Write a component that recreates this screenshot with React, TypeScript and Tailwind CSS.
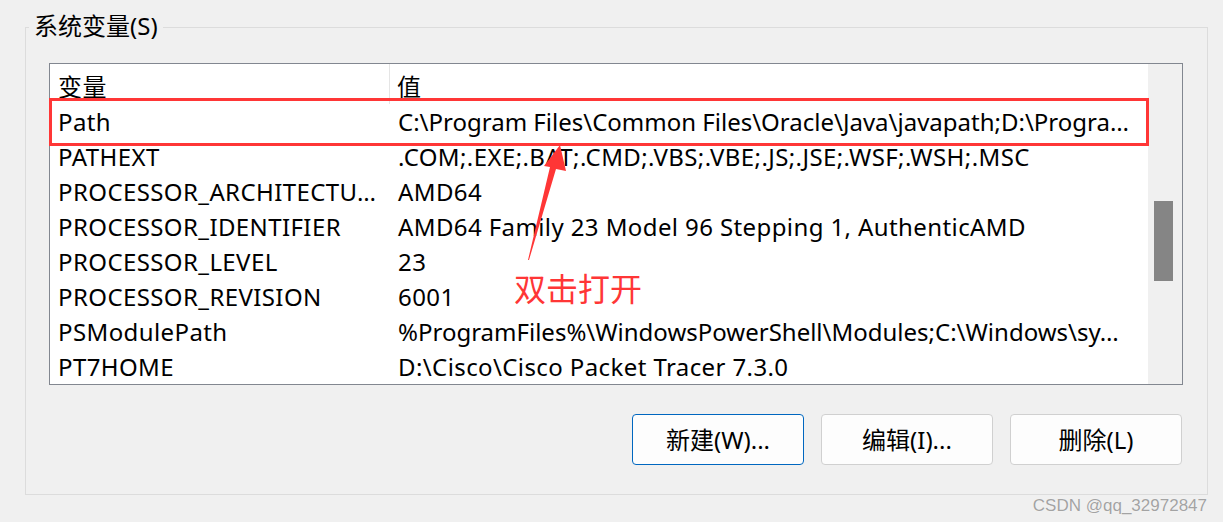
import React from 'react';

type EnvVar = {
  name: string;
  value: string;
  tight?: boolean;
};

// shown exactly as the list view clips them
const VARS: EnvVar[] = [
  { name: 'Path', value: 'C:\\Program Files\\Common Files\\Oracle\\Java\\javapath;D:\\Progra…', tight: true },
  { name: 'PATHEXT', value: '.COM;.EXE;.BAT;.CMD;.VBS;.VBE;.JS;.JSE;.WSF;.WSH;.MSC' },
  { name: 'PROCESSOR_ARCHITECTU…', value: 'AMD64' },
  { name: 'PROCESSOR_IDENTIFIER', value: 'AMD64 Family 23 Model 96 Stepping 1, AuthenticAMD' },
  { name: 'PROCESSOR_LEVEL', value: '23' },
  { name: 'PROCESSOR_REVISION', value: '6001' },
  { name: 'PSModulePath', value: '%ProgramFiles%\\WindowsPowerShell\\Modules;C:\\Windows\\sy…', tight: true },
  { name: 'PT7HOME', value: 'D:\\Cisco\\Cisco Packet Tracer 7.3.0' },
];

const FONT = 'font-["Noto_Sans","Noto_Sans_CJK_SC",sans-serif]';

const WinButton: React.FC<{ label: string; focused?: boolean }> = ({ label, focused }) => (
  <button
    type="button"
    className={
      focused
        ? 'h-[51px] w-[172px] rounded-[4px] border border-[#0067c0] bg-[#fdfdfd] text-[24px] text-black'
        : 'h-[51px] w-[172px] rounded-[4px] border border-[#d0d0d0] bg-[#fdfdfd] text-[24px] text-black'
    }
  >
    {label}
  </button>
);

const App: React.FC = () => {
  return (
    <div className={`relative h-[522px] w-[1223px] overflow-hidden bg-[#f0f0f0] pt-[27px] pl-[25px] text-black ${FONT}`}>
      {/* group box */}
      <div className="relative h-[468px] w-[1183px] border border-[#dcdcdc]">
        <div className="absolute top-[-17px] left-[3px] bg-[#f0f0f0] px-[5px] text-[24px] leading-[30px]">系统变量(S)</div>

        {/* list view */}
        <div className="ml-[23px] mt-[35px] flex h-[322px] w-[1134px] border border-[#828790] bg-white">
          <div className="w-[1098px] text-[24px] tracking-[0.4px]">
            <div className="flex h-[40px] items-center">
              <div className="flex h-full w-[340px] items-center border-r border-[#e5e5e5] pl-[8px] pt-[6px]">变量</div>
              <div className="flex h-full flex-1 items-center pl-[7px] pt-[6px]">值</div>
            </div>
            {VARS.map(v => (
              <div key={v.name} className="flex h-[35px] items-center whitespace-nowrap leading-[35px]">
                <div className="w-[341px] pl-[8px]">{v.name}</div>
                <div className={v.tight ? 'flex-1 pl-[7px] tracking-normal' : 'flex-1 pl-[7px]'}>{v.value}</div>
              </div>
            ))}
          </div>
          {/* scrollbar */}
          <div className="flex-1 bg-[#f0f0f0] pt-[137px]">
            <div className="ml-[6px] h-[80px] w-[19px] bg-[#858585]" />
          </div>
        </div>

        {/* buttons */}
        <div className="mt-[29px] flex justify-end gap-[17px] pr-[25px]">
          <WinButton label="新建(W)..." focused />
          <WinButton label="编辑(I)..." />
          <WinButton label="删除(L)" />
        </div>
      </div>

      {/* annotation: red box, arrow, label */}
      <div className="absolute top-[98px] left-[49px] h-[48px] w-[1100px] border-[3px] border-[#ff3636]" />
      <svg className="absolute top-0 left-0" width="1223" height="522" viewBox="0 0 1223 522">
        <polygon points="528,260 550,167 544,166 560,145 566,171 556,169 529,260" fill="#ff3636" />
      </svg>
      <div className="absolute top-[268px] left-[514px] text-[32px] leading-[42px] text-[#ff3636]">双击打开</div>

      <div className="absolute right-[16px] bottom-[6px] font-['Liberation_Sans',sans-serif] text-[17px] leading-[20px] text-[#a3a3a3] [text-shadow:0_0_1px_#ffffff]">
        CSDN @qq_32972847
      </div>
    </div>
  );
};

export default App;
